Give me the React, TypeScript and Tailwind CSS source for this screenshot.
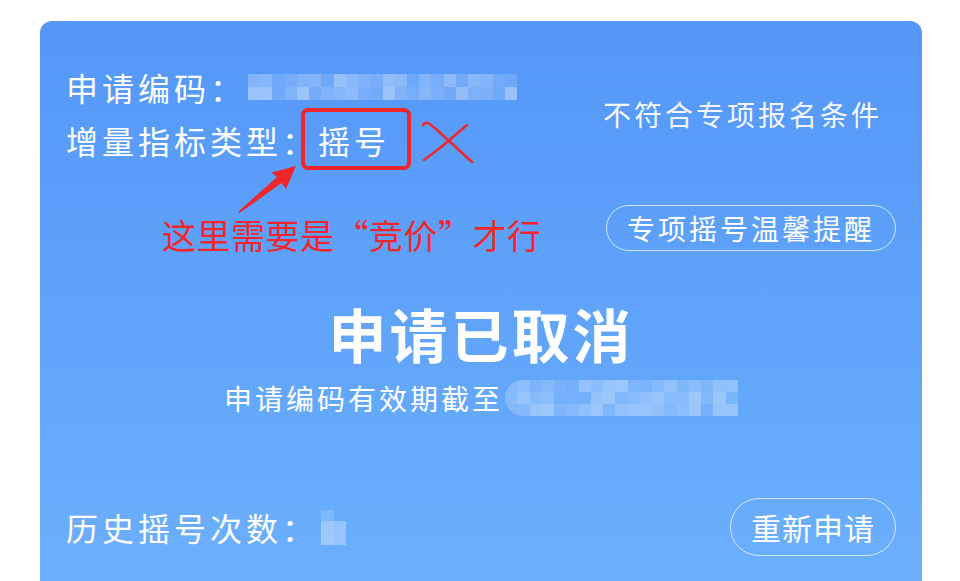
import React from "react";

function rand(seed: number) {
  let s = seed;
  return () => {
    s = (s * 9301 + 49297) % 233280;
    return s / 233280;
  };
}

function Pixels({ rows, cols, seed, min, max, className }: { rows: number; cols: number; seed: number; min: number; max: number; className: string }) {
  const r = rand(seed);
  const cells = Array.from({ length: rows * cols }, () => min + r() * (max - min));
  return (
    <div className={className}>
      {cells.map((o, i) => (
        <div key={i} className="bg-white" style={{ opacity: o }} />
      ))}
    </div>
  );
}

export default function App() {
  return (
    <div className="h-[581px] w-[960px] overflow-hidden bg-white pt-[21px] pl-[40px] font-['Noto_Sans_CJK_SC','Noto_Sans',sans-serif]">
      <div className="relative w-[882px] rounded-[12px] bg-gradient-to-b from-[#5497f8] to-[#6cb0fd] px-[26px] pt-[46px] pb-[40px] text-white">
        <div className="flex justify-between">
          <div className="flex flex-col">
            <div className="flex h-[40px] items-center text-[32px] leading-[40px] tracking-[4px]">
              <span>申请编码：</span>
              <Pixels rows={2} cols={22} seed={7} min={0.12} max={0.42} className="ml-[2px] grid h-[26px] w-[269px] grid-cols-[repeat(22,1fr)] grid-rows-2" />
            </div>
            <div className="mt-[13px] flex h-[40px] items-center text-[32px] leading-[40px] tracking-[4px]">
              <span>增量指标类型：摇号</span>
            </div>
            <div className="mt-[55px] ml-[96px] text-[34px] leading-[40px] tracking-[0.5px] text-[#f3262b]">
              这里需要是“竞价”才行
            </div>
          </div>
          <div className="flex w-[290px] flex-col items-start pt-[29px]">
            <div className="-ml-[3px] text-[28px] leading-[36px] tracking-[3px] text-white/95">不符合专项报名条件</div>
            <div className="mt-[73px] flex h-[46px] w-[290px] items-center justify-center rounded-full border border-white/70 text-[28px] leading-[36px] tracking-[3px]">
              专项摇号温馨提醒
            </div>
          </div>
        </div>

        <div className="mt-[46px] flex justify-center text-[58px] font-bold leading-[64px] tracking-[3px]">申请已取消</div>

        <div className="mt-[13px] flex h-[40px] items-center justify-center">
          <span className="text-[28px] leading-[40px] tracking-[3px]">申请编码有效期截至</span>
          <Pixels rows={3} cols={19} seed={31} min={0.1} max={0.38} className="ml-[2px] grid h-[36px] w-[233px] grid-cols-[repeat(19,1fr)] grid-rows-3 overflow-hidden rounded-l-[18px]" />
        </div>

        <div className="mt-[80px] flex h-[58px] items-center justify-between">
          <div className="flex items-center text-[32px] leading-[40px] tracking-[4px]">
            <span>历史摇号次数：</span>
            <div className="ml-[3px] grid h-[35px] w-[25px] grid-cols-2 grid-rows-3">
              <div className="bg-white/15" />
              <div />
              <div className="bg-white/35" />
              <div className="bg-white/30" />
              <div className="bg-white/35" />
              <div className="bg-white/30" />
            </div>
          </div>
          <div className="flex h-[58px] w-[166px] items-center justify-center rounded-full border border-white/70 text-[30px] leading-[40px] tracking-[1px]">
            重新申请
          </div>
        </div>

        <svg className="pointer-events-none absolute left-[-40px] top-[-21px] h-[581px] w-[960px]" viewBox="0 0 960 581">
          <rect x="303" y="110" width="106" height="58" rx="5" fill="none" stroke="#f0262a" strokeWidth="4" />
          <path d="M423 125 C426 120 430 124 436 129 L472 162" fill="none" stroke="#f0262a" strokeWidth="2.5" strokeLinecap="round" />
          <path d="M467 125 L440 148 L424 160" fill="none" stroke="#f0262a" strokeWidth="2.5" strokeLinecap="round" />
          <polygon points="296,166 286,189 281.5,183 239.5,213 238.5,211.5 277,177 271.5,172.5" fill="#f0262a" />
        </svg>
      </div>
    </div>
  );
}
